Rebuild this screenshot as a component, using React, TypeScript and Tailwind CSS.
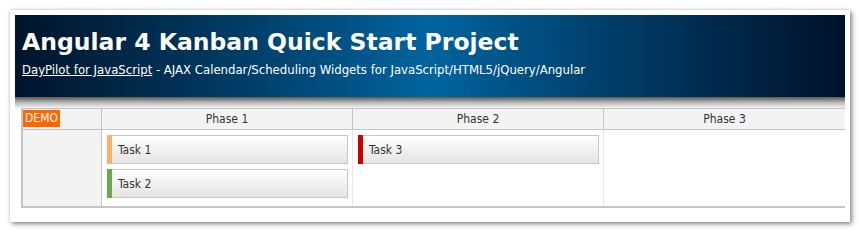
import React from "react";

const small = "font-['DejaVu_Sans_Condensed','Noto_Sans',sans-serif]";

function Task({ name, color }: { name: string; color: string }) {
  return (
    <div className="relative h-[29px] border border-[#c6c6c6] bg-gradient-to-b from-[#ffffff] to-[#e4e4e4] flex items-center pl-[10px]">
      <div className="absolute left-[-1px] top-[-1px] bottom-[-1px] w-[5px]" style={{ background: color }} />
      <span className={`text-[12px] text-[#333] ${small}`}>{name}</span>
    </div>
  );
}

export default function App() {
  return (
    <div className="w-[860px] h-[232px] bg-white pt-[10px] pl-[10px]">
      <div className="w-[840px] h-[212px] bg-white shadow-[2px_2px_5px_rgba(0,0,0,0.45),0_0_3px_rgba(0,0,0,0.15)] p-[5px]">
        <div className="h-[82px] bg-gradient-to-r from-[#00142b] via-[#00649f] to-[#00122a] pl-[7px] pt-[14px]">
          <div className="text-white font-bold text-[23.5px] leading-[26px] font-['DejaVu_Sans',sans-serif]">
            Angular 4 Kanban Quick Start Project
          </div>
          <div className={`text-white text-[13px] leading-[16px] mt-[7px] ${small}`}>
            <span className="underline">DayPilot for JavaScript</span> - AJAX Calendar/Scheduling Widgets for JavaScript/HTML5/jQuery/Angular
          </div>
        </div>
        <div className="h-[11px] bg-gradient-to-b from-[#5a5a5a] via-[#b8b8b8] to-[#f4f4f4]" />
        <div className={`ml-[6px] border-t border-l-2 border-b-2 border-[#c4c4c4] ${small}`}>
          <div className="grid grid-cols-[79px_251px_251px_1fr] h-[21px] bg-[#f3f3f3] border-b border-[#c4c4c4] text-[12px] text-[#333]">
            <div className="border-r border-[#c4c4c4] pl-[0px] pt-[0px]">
              <span className="inline-block bg-[#ff6600] text-white text-[12px] leading-[17px] px-[2px]">DEMO</span>
            </div>
            <div className="border-r border-[#c4c4c4] flex items-center justify-center">Phase 1</div>
            <div className="border-r border-[#c4c4c4] flex items-center justify-center">Phase 2</div>
            <div className="flex items-center justify-center">Phase 3</div>
          </div>
          <div className="grid grid-cols-[79px_251px_251px_1fr] h-[76px]">
            <div className="bg-[#f3f3f3] border-r border-[#c4c4c4]" />
            <div className="border-r border-[#e8e8e8] pt-[5px] pl-[5px] pr-[4px] flex flex-col gap-[5px]">
              <Task name="Task 1" color="#f6b26b" />
              <Task name="Task 2" color="#6aa84f" />
            </div>
            <div className="border-r border-[#e8e8e8] pt-[5px] pl-[5px] pr-[4px] flex flex-col gap-[5px]">
              <Task name="Task 3" color="#cc0000" />
            </div>
            <div />
          </div>
        </div>
      </div>
    </div>
  );
}
